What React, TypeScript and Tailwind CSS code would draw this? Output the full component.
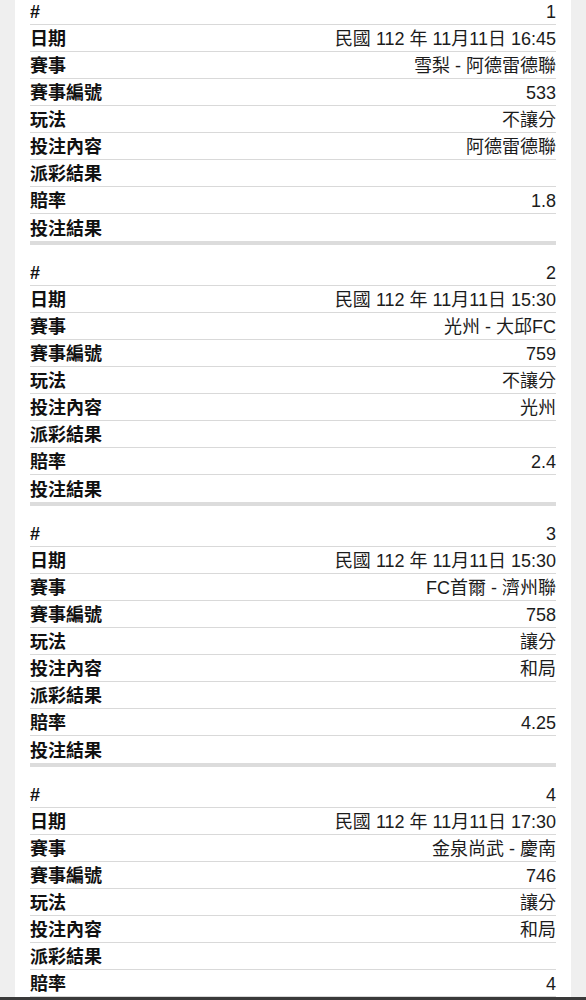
import React from "react";

type Bet = {
  no: string;
  date: string;
  match: string;
  code: string;
  play: string;
  pick: string;
  payout: string;
  odds: string;
  result: string;
};

const bets: Bet[] = [
  { no: "1", date: "民國 112 年 11月11日 16:45", match: "雪梨 - 阿德雷德聯", code: "533", play: "不讓分", pick: "阿德雷德聯", payout: "", odds: "1.8", result: "" },
  { no: "2", date: "民國 112 年 11月11日 15:30", match: "光州 - 大邱FC", code: "759", play: "不讓分", pick: "光州", payout: "", odds: "2.4", result: "" },
  { no: "3", date: "民國 112 年 11月11日 15:30", match: "FC首爾 - 濟州聯", code: "758", play: "讓分", pick: "和局", payout: "", odds: "4.25", result: "" },
  { no: "4", date: "民國 112 年 11月11日 17:30", match: "金泉尚武 - 慶南", code: "746", play: "讓分", pick: "和局", payout: "", odds: "4", result: "" },
];

function Row({ label, value, last }: { label: string; value: string; last?: boolean }) {
  return (
    <div
      className={
        "flex h-[27px] items-center justify-between " +
        (last ? "" : "border-b border-[#d9d9d9]")
      }
    >
      <span className="pt-[2px] text-[18px] font-bold leading-none text-[#111]">{label}</span>
      <span className="pt-[2px] text-[18px] leading-none text-[#1c1c1c]">{value}</span>
    </div>
  );
}

function Group({ b }: { b: Bet }) {
  const rows: [string, string][] = [
    ["#", b.no],
    ["日期", b.date],
    ["賽事", b.match],
    ["賽事編號", b.code],
    ["玩法", b.play],
    ["投注內容", b.pick],
    ["派彩結果", b.payout],
    ["賠率", b.odds],
    ["投注結果", b.result],
  ];
  return (
    <div className="mb-[14px]">
      {rows.map(([l, v], i) => (
        <Row key={i} label={l} value={v} last={i === rows.length - 1} />
      ))}
      <div className="h-[4px] bg-[#dcdcdc]" />
    </div>
  );
}

export default function App() {
  return (
    <div
      className="flex h-[1000px] flex-col overflow-hidden bg-[#efefef]"
      style={{ fontFamily: '"Liberation Sans", "Noto Sans CJK TC", sans-serif' }}
    >
      <div className="mx-[15px] flex-1 overflow-hidden bg-white px-[15px]">
        <div className="mt-[-2px]">
          {bets.map((b) => (
            <Group key={b.no} b={b} />
          ))}
        </div>
      </div>
      <div className="h-[3px] bg-[#3a3a3a]" />
    </div>
  );
}
